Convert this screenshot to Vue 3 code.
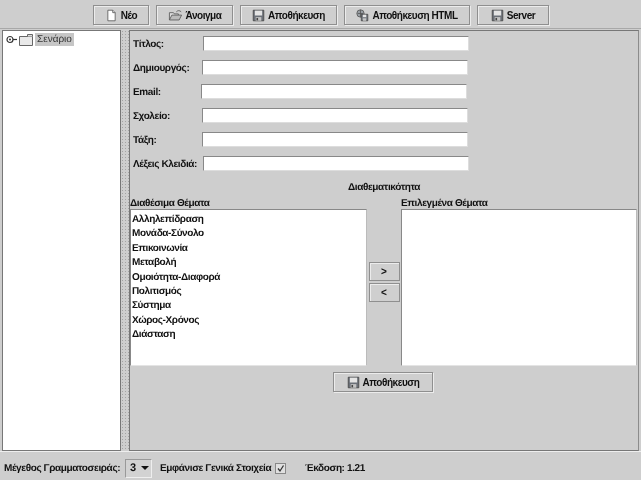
<script setup>
const toolbar = [
  { label: 'Νέο', icon: 'new', width: 56 },
  { label: 'Άνοιγμα', icon: 'open', width: 77 },
  { label: 'Αποθήκευση', icon: 'save', width: 97 },
  { label: 'Αποθήκευση HTML', icon: 'html', width: 126 },
  { label: 'Server', icon: 'save', width: 72 }
]
const fields = [
  { label: 'Τίτλος:', inset: 70 },
  { label: 'Δημιουργός:', inset: 69 },
  { label: 'Email:', inset: 68 },
  { label: 'Σχολείο:', inset: 69 },
  { label: 'Τάξη:', inset: 69 },
  { label: 'Λέξεις Κλειδιά:', inset: 70 }
]
const topics = ['Αλληλεπίδραση', 'Μονάδα-Σύνολο', 'Επικοινωνία', 'Μεταβολή', 'Ομοιότητα-Διαφορά', 'Πολιτισμός', 'Σύστημα', 'Χώρος-Χρόνος', 'Διάσταση']
</script>

<template>
  <div class="page">
    <div class="app">
      <header class="toolbar">
        <button v-for="b in toolbar" :key="b.label" class="btn" :style="{ width: b.width + 'px' }">
          <svg v-if="b.icon === 'new'" class="ico" viewBox="0 0 16 16"><path d="M3.5 1.5h6l3 3v10h-9z" fill="#fff" stroke="#555"/><path d="M9.5 1.5v3h3" fill="#ddd" stroke="#555"/></svg>
          <svg v-else-if="b.icon === 'open'" class="ico wide" viewBox="0 0 18 16"><path d="M1.5 13.5v-9h5l1 1.5h5v2" fill="#ddd" stroke="#555"/><path d="M1.5 13.5l3-6h12l-3 6z" fill="#bbb" stroke="#555"/><path d="M10 3.5c2-2 4-2 6 0" fill="none" stroke="#555"/></svg>
          <svg v-else-if="b.icon === 'save'" class="ico" viewBox="0 0 16 16"><path d="M1.5 1.5h13v13h-13z" fill="#6b7078" stroke="#444"/><path d="M3.5 2h9v6h-9z" fill="#e4e4e4"/><path d="M4.5 10h7v4.500h-7z" fill="#c4c4c4"/><path d="M5.500 11h2v3h-2z" fill="#444"/></svg>
          <svg v-else class="ico" viewBox="0 0 16 16"><circle cx="5.500" cy="5.500" r="4.500" fill="#9aa0a6" stroke="#555"/><path d="M2 5.500h7M5.500 1v9" stroke="#555" fill="none"/><path d="M6.500 6.500h8v8h-8z" fill="#7a7f86" stroke="#444"/><path d="M8.500 7h4v3h-4z" fill="#e4e4e4"/><path d="M8.500 11.500h4v3h-4z" fill="#c4c4c4"/></svg>
          <span>{{ b.label }}</span>
        </button>
      </header>

      <main class="split">
        <aside class="tree">
          <div class="node">
            <svg class="handle" viewBox="0 0 11 9"><circle cx="4" cy="4.500" r="3" fill="#fff" stroke="#333" stroke-width="1.200"/><circle cx="4" cy="4.500" r="1" fill="#333"/><path d="M7 4.500h4" stroke="#333" stroke-width="1.200"/></svg>
            <svg class="folder" viewBox="0 0 14 12"><path d="M.5 2.500h13v9H.5z" fill="#e9e9e9" stroke="#666"/><path d="M8.500 2.500v-2h5v2" fill="#ddd" stroke="#666"/></svg>
            <span class="node-label">Σενάριο</span>
          </div>
        </aside>
        <div class="divider"></div>
        <section class="editor">
          <div class="form">
            <div v-for="f in fields" :key="f.label" class="row">
              <label class="field-label" :style="{ width: f.inset + 'px' }">{{ f.label }}</label>
              <input class="field" type="text" />
            </div>
          </div>
          <div class="cross">Διαθεματικότητα</div>
          <div class="lists">
            <div class="col">
              <div class="col-title">Διαθέσιμα Θέματα</div>
              <ul class="list">
                <li v-for="t in topics" :key="t">{{ t }}</li>
              </ul>
            </div>
            <div class="mover">
              <button class="move">&gt;</button>
              <button class="move">&lt;</button>
            </div>
            <div class="col">
              <div class="col-title">Επιλεγμένα Θέματα</div>
              <ul class="list"></ul>
            </div>
          </div>
          <div class="save-row">
            <button class="btn save">
              <svg class="ico" viewBox="0 0 16 16"><path d="M1.500 1.500h13v13h-13z" fill="#6b7078" stroke="#444"/><path d="M3.500 2h9v6h-9z" fill="#e4e4e4"/><path d="M4.500 10h7v4.500h-7z" fill="#c4c4c4"/><path d="M5.500 11h2v3h-2z" fill="#444"/></svg>
              <span>Αποθήκευση</span>
            </button>
          </div>
        </section>
      </main>

      <footer class="status">
        <span class="s1">Μέγεθος Γραμματοσειράς:</span>
        <span class="combo">3<i class="arrow"></i></span>
        <span class="s2">Εμφάνισε Γενικά Στοιχεία</span>
        <span class="check"><svg viewBox="0 0 9 9"><path d="M2 4.500l2 2.500 3.500-5.500" fill="none" stroke="#333" stroke-width="1.300"/></svg></span>
        <span class="s3">Έκδοση: 1.21</span>
      </footer>
    </div>
  </div>
</template>

<style>
html, body { margin: 0; background: #fff; }
</style>

<style scoped>
.page {
  width: 643px;
  height: 484px;
  background: #fff;
  overflow: hidden;
  font: bold 10px "Liberation Sans", Arial, sans-serif;
  letter-spacing: -0.38px;
  text-rendering: geometricPrecision;
  color: #111;
  white-space: nowrap;
}
.app {
  width: 641px;
  height: 480px;
  background: #cecece;
  display: flex;
  flex-direction: column;
  filter: blur(0.35px);
}
.toolbar {
  height: 29px;
  box-sizing: border-box;
  padding: 5px 0 0 93px;
  display: flex;
  gap: 7px;
  border-bottom: 1px solid #a8a8a8;
}
.btn {
  height: 20px;
  box-sizing: border-box;
  margin: 0;
  padding: 0;
  display: flex;
  align-items: center;
  justify-content: center;
  gap: 3px;
  font: inherit;
  letter-spacing: -0.45px;
  color: inherit;
  background: #cfcfcf;
  border: 1px solid #8f8f8f;
  box-shadow: inset 1px 1px 0 #ececec, 1px 1px 0 #ececec;
}
.ico { width: 13px; height: 13px; flex: none; }
.ico.wide { width: 15px; }
.split {
  flex: 1;
  display: flex;
  padding: 1px 2px 0 2px;
  min-height: 0;
}
.tree {
  width: 120px;
  box-sizing: border-box;
  background: #fff;
  border: 1px solid #777;
  padding: 2px 0 0 3px;
}
.node { display: flex; align-items: center; height: 13px; }
.handle { width: 11px; height: 9px; }
.folder { width: 14px; height: 12px; margin-left: 2px; }
.node-label {
  margin-left: 2px;
  width: 39px;
  box-sizing: border-box;
  height: 13px;
  line-height: 13px;
  padding-left: 2px;
  background: #c6c6c6;
  font-weight: normal;
  letter-spacing: 0;
  color: #333;
}
.divider {
  width: 8px;
  background-image: radial-gradient(#a4a4a4 0.6px, transparent 0.8px);
  background-size: 3px 3px;
}
.editor {
  flex: 1;
  box-sizing: border-box;
  border: 1px solid #777;
  border-right-color: #8c8c8c;
  padding: 0 1px 0 0;
  display: flex;
  flex-direction: column;
}
.form {
  padding: 5px 0 0 3px;
  display: flex;
  flex-direction: column;
  gap: 9px;
}
.row { display: flex; align-items: center; height: 15px; }
.field-label { flex: none; padding-top: 2px; }
.field {
  flex: none;
  width: 266px;
  height: 15px;
  box-sizing: border-box;
  background: #fff;
  border: 1px solid #888;
  border-bottom-color: #ddd;
  border-right-color: #ddd;
  margin: 0;
  padding: 0;
  outline: none;
}
.cross {
  margin-top: 9px;
  height: 12px;
  line-height: 15px;
  text-align: center;
  padding-left: 1px;
}
.lists {
  margin-top: 4px;
  display: flex;
  height: 170px;
}
.col { display: flex; flex-direction: column; width: 237px; }
.col + .mover + .col { width: 236px; }
.col-title {
  height: 12px;
  line-height: 15px;
  margin-bottom: 1px;
}
.list {
  flex: 1;
  margin: 0;
  padding: 3px 0 0 1px;
  list-style: none;
  background: #fff;
  border-top: 1px solid #888;
  border-left: 1px solid #888;
  border-right: 1px solid #bbb;
  border-bottom: 1px solid #e4e4e4;
}
.list li { height: 14.400px; line-height: 14.400px; }
.mover {
  width: 34px;
  box-sizing: border-box;
  padding-top: 66px;
  display: flex;
  flex-direction: column;
  align-items: center;
  gap: 2px;
}
.move {
  width: 31px;
  height: 19px;
  margin: 0;
  padding: 0;
  font: inherit;
  color: inherit;
  background: #cfcfcf;
  border: 1px solid #8f8f8f;
  box-shadow: inset 1px 1px 0 #ececec;
}
.save-row { padding: 6px 0 0 203px; }
.save { width: 100px; }
.status {
  height: 29px;
  box-sizing: border-box;
  border-top: 1px solid #eee;
  display: flex;
  align-items: center;
  padding: 4px 0 0 4px;
}
.s1 { width: 121px; flex: none; }
.combo {
  width: 27px;
  height: 19px;
  box-sizing: border-box;
  display: flex;
  align-items: center;
  gap: 5px;
  padding-left: 4px;
  background: #d2d2d2;
  border: 1px solid #999;
  border-right-color: #eee;
  border-bottom-color: #eee;
  font-size: 11px;
  flex: none;
}
.arrow {
  width: 0;
  height: 0;
  border-left: 4px solid transparent;
  border-right: 4px solid transparent;
  border-top: 4px solid #111;
}
.s2 { margin-left: 8px; width: 115px; flex: none; }
.check {
  width: 11px;
  height: 11px;
  box-sizing: border-box;
  background: #e0e0e0;
  border: 1px solid #888;
  display: flex;
  flex: none;
}
.check svg { width: 9px; height: 9px; }
.s3 { margin-left: 19px; }
</style>
